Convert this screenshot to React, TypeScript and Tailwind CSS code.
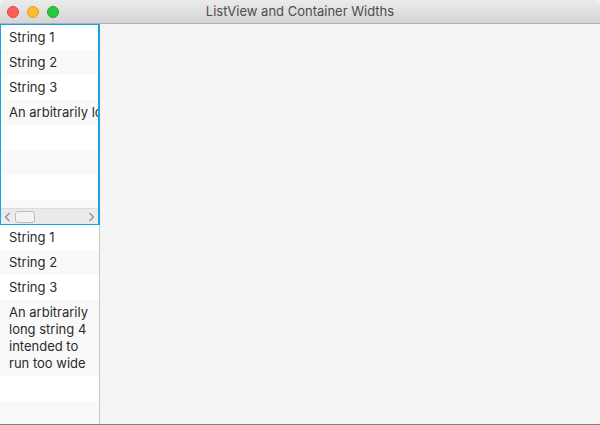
import React from 'react';

const items = ['String 1', 'String 2', 'String 3', 'An arbitrarily long string 4 intended to run too wide'];

const TrafficLights = () => (
  <div className="absolute left-[7px] top-[6px] flex gap-[8px]">
    <span className="block h-[12px] w-[12px] rounded-full border border-[#e0443e] bg-[#fd5f57]" />
    <span className="block h-[12px] w-[12px] rounded-full border border-[#dea123] bg-[#febc2e]" />
    <span className="block h-[12px] w-[12px] rounded-full border border-[#1aab29] bg-[#28c840]" />
  </div>
);

const Row = ({ text, odd, wrap }: { text?: string; odd: boolean; wrap: boolean }) => (
  <div
    className={
      (odd ? 'bg-[#f9f9f9] ' : 'bg-white ') +
      (wrap ? 'whitespace-normal pl-[9px] ' : 'whitespace-nowrap pl-[8px] ') +
      'shrink-0 min-h-[25px] py-[4px] pr-[4px] leading-[17px]'
    }
  >
    {text ?? '\u00a0'}
  </div>
);

export default function App() {
  const rows = (wrap: boolean, total: number) =>
    Array.from({ length: total }, (_, i) => <Row key={i} text={items[i]} odd={i % 2 === 1} wrap={wrap} />);

  return (
    <div
      className="flex h-[425px] w-[600px] flex-col overflow-hidden bg-[#f4f4f4] text-[13px] text-[#2b2b2b]"
      style={{ fontFamily: 'Inter, "Liberation Sans", sans-serif' }}
    >
      {/* Title bar */}
      <div className="relative flex h-[24px] shrink-0 items-center justify-center rounded-t-[5px] border-b border-[#b1b1b1] bg-gradient-to-b from-[#ebebeb] to-[#d5d5d5]">
        <TrafficLights />
        <span className="text-[13px] text-[#4d4d4d]">ListView and Container Widths</span>
      </div>

      <div className="flex min-h-0 flex-1 border-b border-[#7f7f7f]">
        <div className="flex w-[100px] shrink-0 flex-col">
          {/* Top list: focused, clipped with horizontal scrollbar */}
          <div className="flex h-[201px] shrink-0 flex-col border border-r-2 border-[#1ba1e2] bg-white">
            <div className="flex min-h-0 flex-1 flex-col overflow-hidden">{rows(false, 8)}</div>
            <div className="flex h-[16px] shrink-0 items-center border-t border-[#dcdcdc] bg-[#ebebeb] px-[3px]">
              <svg width="7" height="10" viewBox="0 0 7 10" className="mr-[4px]">
                <path d="M5.5 1 L1.5 5 L5.5 9" fill="none" stroke="#8a8a8a" strokeWidth="1.2" />
              </svg>
              <div className="h-[12px] w-[20px] rounded-[3px] border border-[#bdbdbd] bg-[#f3f3f3]" />
              <div className="flex-1" />
              <svg width="7" height="10" viewBox="0 0 7 10">
                <path d="M1.5 1 L5.5 5 L1.5 9" fill="none" stroke="#8a8a8a" strokeWidth="1.2" />
              </svg>
            </div>
          </div>

          {/* Bottom list: wraps */}
          <div className="flex min-h-0 flex-1 flex-col overflow-hidden border-r border-[#c8c8c8] bg-white">
            {rows(true, 7)}
          </div>
        </div>
        <div className="flex-1" />
      </div>
    </div>
  );
}
